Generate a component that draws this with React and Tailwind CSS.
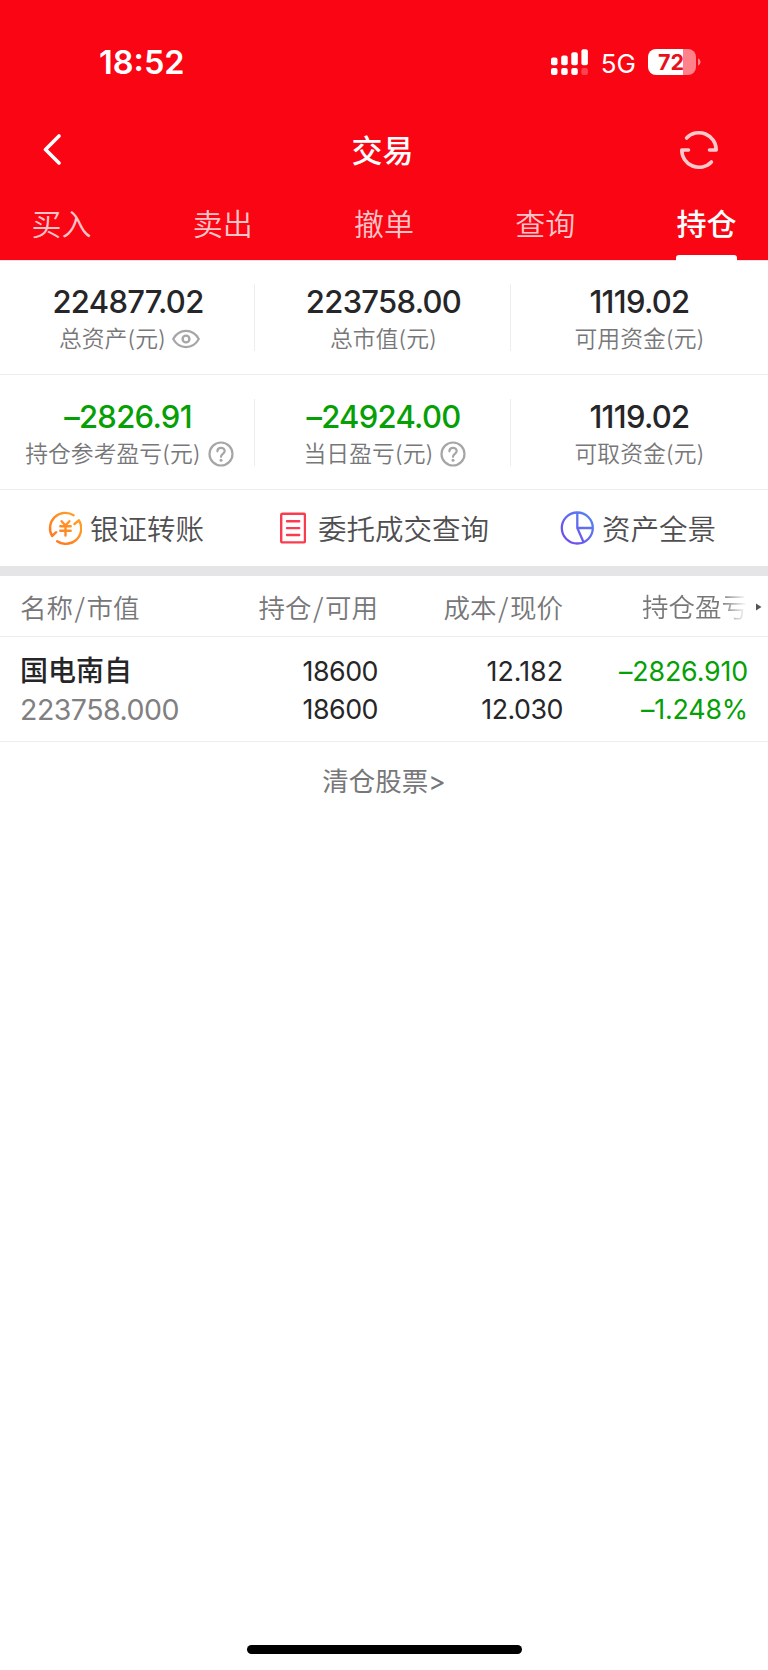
import { useState } from 'react'
import clsx from 'clsx'

const TABS = ['买入', '卖出', '撤单', '查询', '持仓']

const STATS = [
  [
    { label: '总资产(元)', value: '224877.02', icon: 'eye' },
    { label: '总市值(元)', value: '223758.00' },
    { label: '可用资金(元)', value: '1119.02' },
  ],
  [
    { label: '持仓参考盈亏(元)', value: '–2826.91', icon: 'help', down: true },
    { label: '当日盈亏(元)', value: '–24924.00', icon: 'help', down: true },
    { label: '可取资金(元)', value: '1119.02' },
  ],
]

const latin = "font-['Inter','Noto_Sans_CJK_SC',sans-serif]"

function SignalIcon() {
  return (
    <svg width="38" height="26" viewBox="0 0 38 26" fill="#fff">
      <rect x="0" y="8.5" width="6.5" height="7.7" rx="2" />
      <rect x="10.2" y="6.5" width="6.5" height="9.7" rx="2" />
      <rect x="20.3" y="3.2" width="6.5" height="13" rx="2" />
      <rect x="30.4" y="0.2" width="6.5" height="16" rx="2" />
      <rect x="0" y="19" width="6.5" height="7" rx="2" />
      <rect x="10.2" y="19" width="6.5" height="7" rx="2" />
      <rect x="20.3" y="19" width="6.5" height="7" rx="2" />
      <rect x="30.4" y="19" width="6.5" height="7" rx="2" opacity="0.25" />
    </svg>
  )
}

function Battery() {
  return (
    <div className="flex items-center gap-[2px]">
      <div className="flex h-[26px] w-[48px] items-center justify-center rounded-[8px] bg-[linear-gradient(90deg,#fff_72%,#ff828a_72%)] pr-[2px] pt-[2px]">
        <span className="text-[21.5px] font-bold leading-none text-[#e8101c]">72</span>
      </div>
      <svg width="3" height="8" viewBox="0 0 3 8">
        <path d="M0 0.3Q2.6 1.6 2.6 4T0 7.7z" fill="#ff828a" />
      </svg>
    </div>
  )
}

function RefreshIcon() {
  return (
    <svg width="40" height="40" viewBox="0 0 40 40" fill="none" stroke="#ffc9cc" strokeWidth="3.6" strokeLinecap="round" strokeLinejoin="round">
      <path d="M7.6 8A17.2 17.2 0 0 1 37.2 20H30.5" />
      <path d="M32.4 32A17.2 17.2 0 0 1 2.8 20H9.5" />
    </svg>
  )
}

function EyeIcon() {
  return (
    <svg width="28" height="20" viewBox="0 0 28 20" fill="none" stroke="#a6a6a8" strokeWidth="2.2">
      <path d="M1.2 10C4 5 8.5 1.9 14 1.9S24 5 26.8 10C24 15 19.5 18.1 14 18.1S4 15 1.2 10z" strokeLinejoin="round" />
      <circle cx="14" cy="10" r="3.4" strokeWidth="2.4" />
    </svg>
  )
}

function HelpIcon() {
  return (
    <svg width="26" height="26" viewBox="0 0 26 26" fill="none" stroke="#a6a6a8" strokeWidth="2.2" strokeLinecap="round">
      <circle cx="13" cy="13" r="11.5" />
      <path d="M9.4 10.3C9.4 5.8 16.7 5.9 16.7 10.1C16.7 12.8 13 12.9 13 15.8" />
      <circle cx="13" cy="19.2" r="1.5" fill="#a6a6a8" stroke="none" />
    </svg>
  )
}

function TransferIcon() {
  return (
    <svg width="34" height="34" viewBox="0 0 34 34" fill="none" stroke="url(#orange)" strokeWidth="2.4" strokeLinecap="round" strokeLinejoin="round">
      <defs>
        <linearGradient id="orange" x1="0" y1="34" x2="34" y2="0" gradientUnits="userSpaceOnUse">
          <stop offset="0" stopColor="#ff7020" />
          <stop offset="1" stopColor="#ffa928" />
        </linearGradient>
      </defs>
      <path d="M25.6 4.2A15.4 15.4 0 0 0 4.1 25L8.2 21.2" />
      <path d="M9.2 30.2A15.4 15.4 0 0 0 30.900 9.300L26.500 13" />
      <path d="M13.6 10.2L17.5 14.5L21.4 10.2M12.3 15.3H22.7M12.3 19.8H22.7M17.5 14.5V24.6" />
    </svg>
  )
}

function OrdersIcon() {
  return (
    <svg width="26" height="32" viewBox="0 0 26 32" fill="none" stroke="#fb3c4e" strokeWidth="2.4" strokeLinecap="round">
      <rect x="1.2" y="1.7" width="23.8" height="28.7" rx="1.5" />
      <path d="M7 9.2H19.2M7 16.1H19.2M7 23H19.2" />
    </svg>
  )
}

function PieIcon() {
  return (
    <svg width="34" height="34" viewBox="0 0 34 34" fill="none" stroke="url(#violet)" strokeWidth="2.3">
      <defs>
        <linearGradient id="violet" x1="0" y1="34" x2="34" y2="0" gradientUnits="userSpaceOnUse">
          <stop offset="0.1" stopColor="#7448ec" />
          <stop offset="0.9" stopColor="#5384f2" />
        </linearGradient>
      </defs>
      <circle cx="17.3" cy="17" r="15.5" />
      <path d="M17.3 1.5V17L23.6 31.2M17.3 17H32.8" />
    </svg>
  )
}

function Stat({ label, value, icon, down }) {
  return (
    <div className="flex flex-col items-center">
      <div className={clsx('flex h-[36px] items-center text-[31px] font-medium tracking-[-0.7px]', down ? 'text-[#05a005]' : 'text-[#262628]')}>
        {value}
      </div>
      <div className={clsx('flex h-[38px] items-center text-[22.8px] text-[#777779]', icon === 'eye' && 'gap-[6px] pl-[3px]', icon === 'help' && 'gap-[7px] pl-[3px]')}>
        <span className="font-[350]">{label}</span>
        {icon === 'eye' && <EyeIcon />}
        {icon === 'help' && <HelpIcon />}
      </div>
    </div>
  )
}

function PairLabel({ first, second }) {
  return (
    <>
      {first}
      <span className="mx-[1.5px] font-['Noto_Sans_CJK_SC',sans-serif]">/</span>
      {second}
    </>
  )
}

export default function App() {
  const [tab, setTab] = useState('持仓')

  return (
    <div className={clsx('flex h-[1670px] w-[768px] flex-col overflow-hidden whitespace-nowrap bg-white', latin)}>
      <header className="flex h-[261px] shrink-0 flex-col border-b border-[#f6e0e4] bg-[#fa0514] text-white">
        <div className="flex h-[124px] items-center justify-between pl-[99px] pr-[67px]">
          <span className="pt-[3px] text-[32.5px] font-semibold">18:52</span>
          <div className="flex items-center">
            <SignalIcon />
            <span className="ml-[12px] mr-[12px] pt-[3px] text-[26px] leading-[26px]">5G</span>
            <Battery />
          </div>
        </div>

        <div className="flex h-[51px] items-center justify-between pl-[40px] pr-[49px]">
          <button className="flex w-[40px]">
            <svg width="22" height="32" viewBox="0 0 22 32" fill="none" stroke="#fff" strokeWidth="3.6" strokeLinecap="round" strokeLinejoin="round">
              <path d="M19 2L5.500 15.500L19 29" />
            </svg>
          </button>
          <h1 className="pl-[6px] pt-[4px] text-[31px] font-medium">交易</h1>
          <button>
            <RefreshIcon />
          </button>
        </div>

        <nav className="flex h-[85px] justify-between px-[31px]">
          {TABS.map(t => (
            <button
              key={t}
              onClick={() => setTab(t)}
              className={clsx('flex w-[61px] flex-col items-center justify-between pt-[26px] text-[30px] leading-[46px]', t === tab ? 'font-medium text-white' : 'font-[350] text-[#ffc4c7]')}
            >
              <span>{t}</span>
              {t === tab && <span className="-mb-px h-[6px] w-[61px] rounded-t-[3px] bg-white" />}
            </button>
          ))}
        </nav>
      </header>

      {STATS.map((row, i) => (
        <section key={i} className={clsx('flex shrink-0 items-start border-b border-[#ededef]', i === 0 ? 'h-[114px] pt-[23px]' : 'h-[115px] pt-[24px]')}>
          {row.map((s, j) => (
            <div key={s.label} className={clsx('h-[67px]', j === 0 && 'w-[255px] border-r border-[#ededef] pl-[2px]', j === 1 && 'w-[256px] border-r border-[#ededef] pl-[2px]', j === 2 && 'w-[257px]')}>
              <Stat {...s} />
            </div>
          ))}
        </section>
      ))}

      <section className="flex h-[76px] shrink-0 items-center text-[28.5px] font-[350] text-[#4f4f51]">
        <div className="flex w-[231px] items-center gap-[8px] pl-[48px]">
          <TransferIcon />
          <span className="pt-[4px]">银证转账</span>
        </div>
        <div className="flex w-[329px] items-center gap-[12px] pl-[49px]">
          <OrdersIcon />
          <span className="pt-[4px]">委托成交查询</span>
        </div>
        <div className="flex items-center gap-[8px]">
          <PieIcon />
          <span className="pt-[4px]">资产全景</span>
        </div>
      </section>
      <div className="h-[10px] shrink-0 bg-[#e5e5e7]" />

      <div className="flex h-[61px] shrink-0 items-center border-b border-[#ededef] pt-[3px] text-[26.5px] font-[350] text-[#777779]">
        <span className="w-[198px] pl-[20px]">
          <PairLabel first="名称" second="市值" />
        </span>
        <span className="w-[180px] text-right">
          <PairLabel first="持仓" second="可用" />
        </span>
        <span className="w-[185px] text-right">
          <PairLabel first="成本" second="现价" />
        </span>
        <span className="ml-[79px] w-[106px] overflow-hidden bg-[linear-gradient(90deg,#777779_74%,#fff_99%)] bg-clip-text text-transparent">持仓盈亏</span>
        <svg className="mb-[2px] ml-[8px]" width="6" height="8" viewBox="0 0 6 8">
          <path d="M0 0.5L5.5 4L0 7.5z" fill="#555557" />
        </svg>
      </div>

      <div className="flex h-[105px] shrink-0 border-b border-[#ededef] pt-[15px] text-[26.8px] leading-[38px] tracking-[-0.5px] text-[#262628]">
        <div className="flex w-[198px] flex-col pl-[20px]">
          <span className="text-[28px] font-medium tracking-normal">国电南自</span>
          <span className="pt-[1px] text-[28.5px] tracking-[-0.5px] text-[#808082]">223758.000</span>
        </div>
        <div className="flex w-[180px] flex-col text-right">
          <span>18600</span>
          <span>18600</span>
        </div>
        <div className="flex w-[185px] flex-col text-right">
          <span className="tracking-normal">12.182</span>
          <span>12.030</span>
        </div>
        <div className="flex w-[185px] flex-col text-right tracking-[-0.15px] text-[#05a005]">
          <span>–2826.910</span>
          <span>–1.248%</span>
        </div>
      </div>

      <button className="h-[80px] shrink-0 text-center text-[26.5px] text-[#777779]">清仓股票&gt;</button>

      <div className="mx-auto mb-[16px] mt-auto h-[9px] w-[275px] rounded-full bg-black" />
    </div>
  )
}
